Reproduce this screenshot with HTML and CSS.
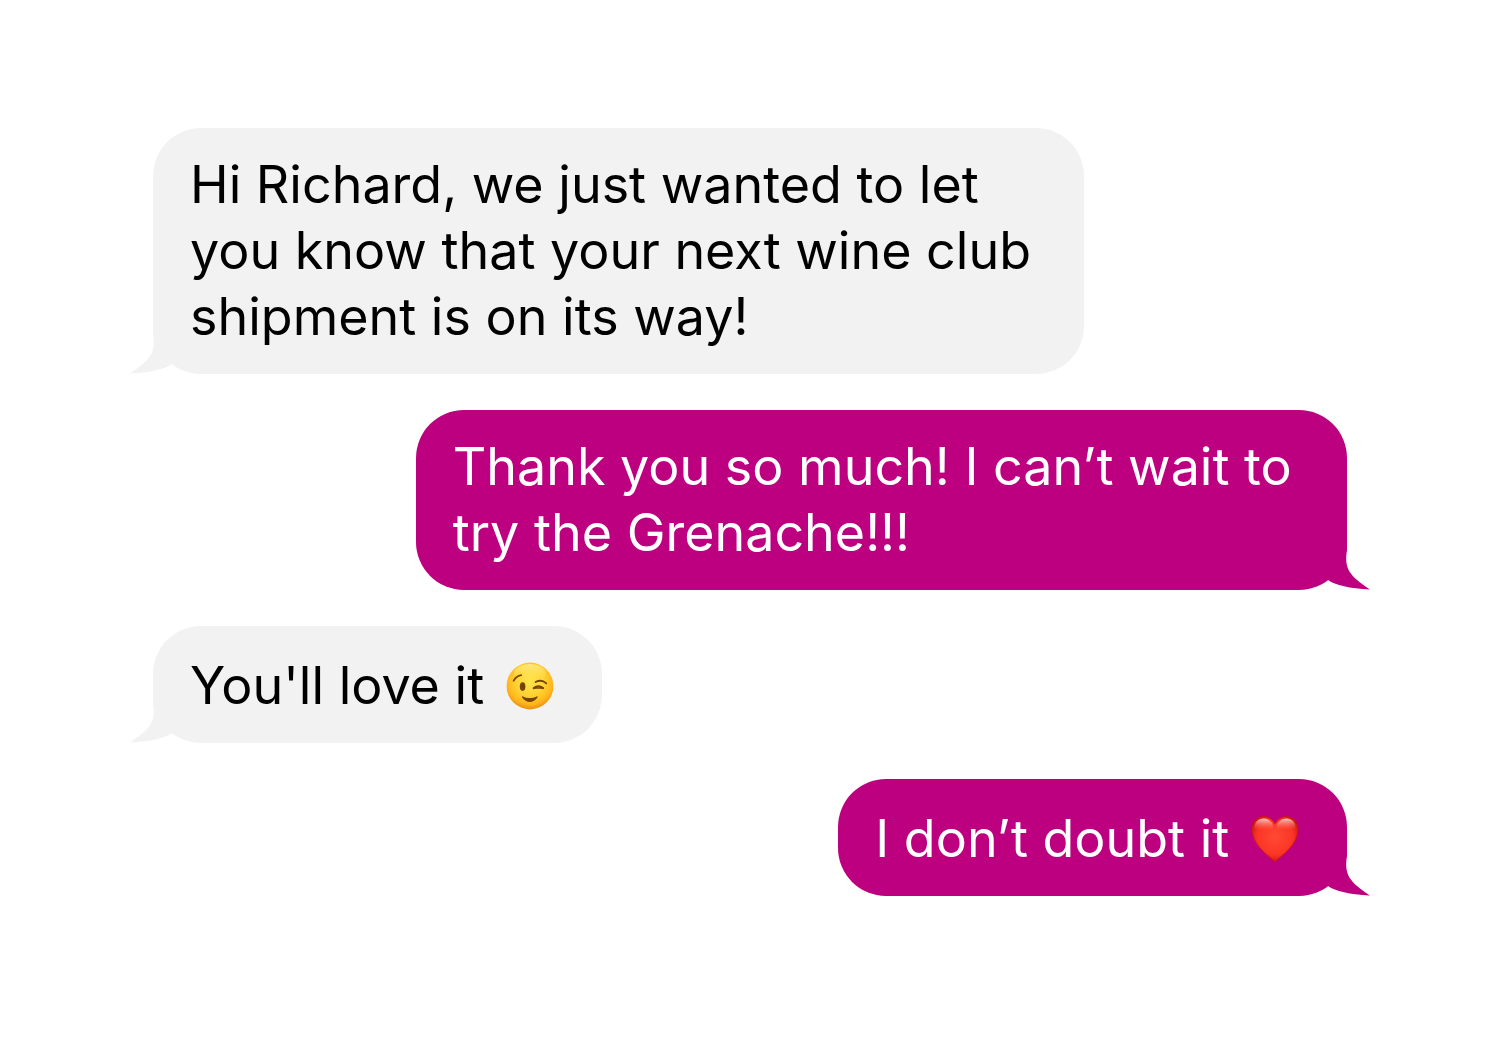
FILE: index.html
```html
<!DOCTYPE html>
<html lang="en">
<head>
  <meta charset="UTF-8" />
  <meta name="viewport" content="width=device-width, initial-scale=1" />
  <title>Messages</title>
  <link rel="stylesheet" href="styles.css">
</head>
<body>

  <main class="chat">
    <!-- Winery -->
    <div class="message received">
      <p>Hi Richard, we just wanted to let you know that your next wine club shipment is on its way!</p>
      <svg class="tail" viewBox="0 0 43 48" aria-hidden="true"><path d="M23 0V8C26 26 21 34 0 47.4Q31 46 42 38L43 0Z" /></svg>
    </div>

    <!-- Customer -->
    <div class="message sent">
      <p>Thank you so much! I can’t wait to try the Grenache!!!</p>
      <svg class="tail" viewBox="0 0 43 48" aria-hidden="true"><path d="M23 0V8C26 26 21 34 0 47.4Q31 46 42 38L43 0Z" /></svg>
    </div>

    <div class="message received">
      <p>You'll love it
        <svg class="emoji" viewBox="0 0 48 48" role="img" aria-label="Winking face">
          <defs>
            <radialGradient id="face" cx="50%" cy="40%" r="61%">
              <stop offset="0" stop-color="#ffe44c" />
              <stop offset="0.5" stop-color="#ffd233" />
              <stop offset="0.8" stop-color="#ffb61c" />
              <stop offset="1" stop-color="#e98a0b" />
            </radialGradient>
            <linearGradient id="shine" x1="0" y1="0" x2="0" y2="1">
              <stop offset="0" stop-color="#fff6a0" stop-opacity="0.7" />
              <stop offset="1" stop-color="#ffe34c" stop-opacity="0" />
            </linearGradient>
          </defs>
          <circle cx="24" cy="24" r="23.4" fill="url(#face)" />
          <ellipse cx="24" cy="11" rx="16" ry="9" fill="url(#shine)" />
          <ellipse cx="16.6" cy="24.6" rx="2.8" ry="4.3" fill="#774300" />
          <g fill="none" stroke="#774300" stroke-linecap="round">
            <path d="M7.6 18.8Q10.2 14 15.2 13.2" stroke-width="1.7" />
            <path d="M29.6 20Q35.5 17 40.3 21.3" stroke-width="1.8" />
            <path d="M27.8 26.2Q32.3 22.6 37 26.2" stroke-width="2.2" />
            <path d="M28.5 26.2H36.5" stroke-width="1.2" />
          </g>
          <path d="M17 34.4C21 36.4 26.5 36.4 30.6 34.4C31.4 34 31.9 34.6 31.4 35.5C27.6 41.4 20 41.4 16.2 35.5C15.7 34.6 16.2 34 17 34.4Z" fill="#774300" />
        </svg>
      </p>
      <svg class="tail" viewBox="0 0 43 48" aria-hidden="true"><path d="M23 0V8C26 26 21 34 0 47.4Q31 46 42 38L43 0Z" /></svg>
    </div>

    <div class="message sent">
      <p>I don’t doubt it
        <svg class="emoji" viewBox="0 0 48 48" role="img" aria-label="Red heart">
          <defs>
            <radialGradient id="heart" cx="50%" cy="45%" r="60%">
              <stop offset="0" stop-color="#ff4a33" />
              <stop offset="0.65" stop-color="#fb3526" />
              <stop offset="1" stop-color="#c4100a" />
            </radialGradient>
            <linearGradient id="gloss" x1="0" y1="0" x2="0" y2="1">
              <stop offset="0" stop-color="#fff" stop-opacity="0.75" />
              <stop offset="1" stop-color="#ff7a66" stop-opacity="0" />
            </linearGradient>
          </defs>
          <path d="M24 47C17 40 1 30 1 14.2C1 6.5 6.2 1.5 12.7 1.5C18 1.5 22 4.7 24 8.7C26 4.7 30 1.5 35.3 1.5C41.8 1.5 47 6.5 47 14.2C47 30 31 40 24 47Z" fill="url(#heart)" stroke="#c8170f" stroke-width="0.8" />
          <path d="M3.5 13C3.5 7 7.5 3.5 12.5 3.5C17.5 3.5 21.3 7 22.3 11V15H3.5ZM25.7 11C26.7 7 30.5 3.5 35.5 3.5C40.5 3.5 44.5 7 44.5 13V15H25.7Z" fill="url(#gloss)" />
        </svg>
      </p>
      <svg class="tail" viewBox="0 0 43 48" aria-hidden="true"><path d="M23 0V8C26 26 21 34 0 47.4Q31 46 42 38L43 0Z" /></svg>
    </div>
  </main>

</body>
</html>
```
FILE: styles.css
```css
body {
  margin: 0;
  background: #fff;
  font-family: Inter, "Liberation Sans", sans-serif;
  font-size: 52px;
  line-height: 66px;
}
.chat {
  display: flex;
  flex-direction: column;
  gap: 36px;
  padding: 128px 153px;
}
.message {
  position: relative;
  box-sizing: border-box;
  max-width: 78%;
  padding: 24px 48px 24px 37px;
  border-radius: 48px;
}
.message p {
  margin: 0;
}
.received {
  align-self: flex-start;
  background: #f2f2f2;
  color: #000;
}
.sent {
  align-self: flex-end;
  background: #bd007f;
  color: #fff;
}
.tail {
  position: absolute;
  bottom: 0;
  left: -23px;
  width: 43px;
  height: 48px;
  fill: #f2f2f2;
}
.sent .tail {
  left: auto;
  right: -23px;
  fill: #bd007f;
  transform: scaleX(-1);
}
.emoji {
  width: 48px;
  height: 48px;
  margin: 12px 0 0 7px;
  vertical-align: -6px;
}
```
